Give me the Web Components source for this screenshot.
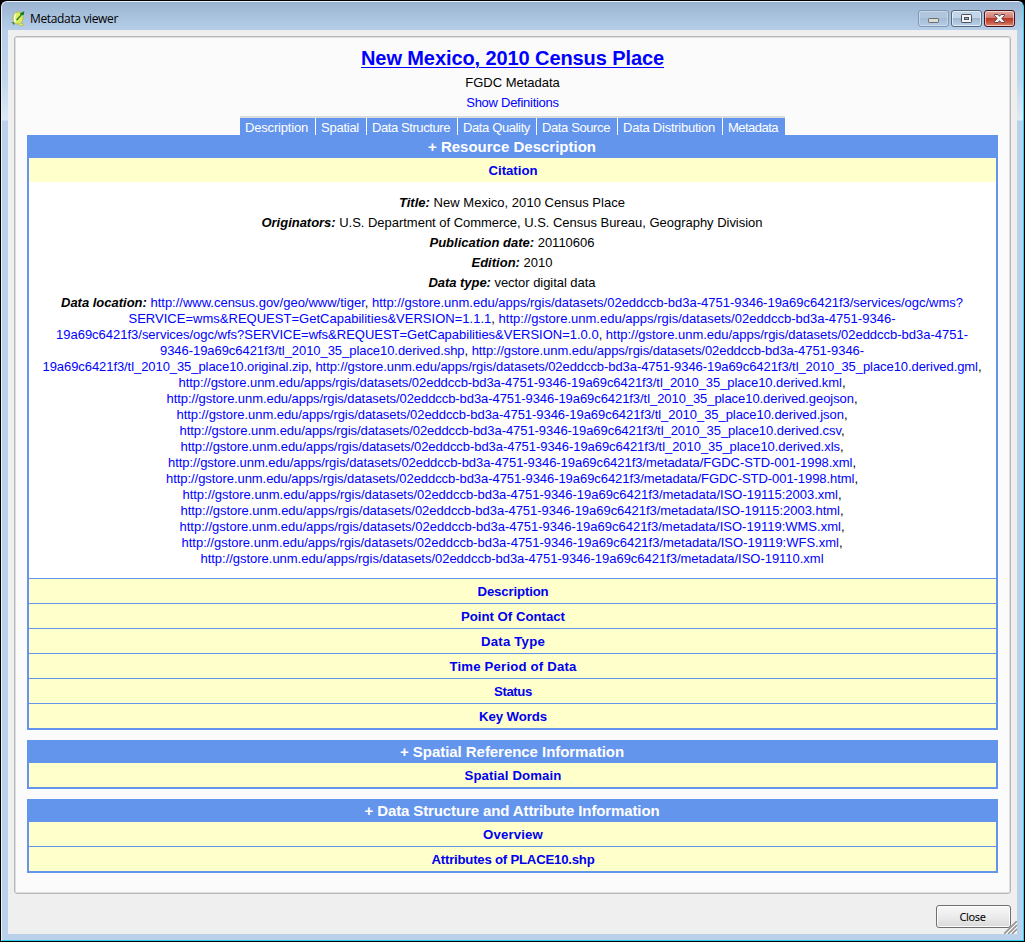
<!DOCTYPE html>
<html lang="en">
<head>
<meta charset="utf-8">
<title>Metadata viewer</title>
<style>
html,body{margin:0;height:100%;overflow:hidden;background:#000}
body{font:13px/16px "Liberation Sans",Arial,sans-serif;color:#000}
</style>
</head>
<body>
<viewer-window></viewer-window>

<template id="t-window">
<style>
:host{display:flex;flex-direction:column;box-sizing:border-box;width:1025px;height:942px;padding:1px 1px 1px 1px;background:#000}
.frame{flex:1;display:flex;flex-direction:column;box-sizing:border-box;border:1px solid #e8f1fa;border-right-color:#2fd0ee;border-bottom-color:#2fd0ee;border-radius:6px 6px 0 0;padding:0 6px 6px 6px;
background:linear-gradient(#99b4d1,#b7cfe9 29px,#b9d1ea 50px,#bfd5ec 75px,#dde9f5 117px,#dde9f5 118px,#b9d1ea 119px,#b9d1ea)}
.client{flex:1;display:flex;flex-direction:column;background:#efefef;padding:6px 6px 0;min-height:0}
.panel{height:858px;box-sizing:border-box;border:1px solid #b8b8b8;border-radius:3px;box-shadow:inset 0 0 0 1px #dedede;background:#fbfbfb;padding:9px 10px 0 12px}
.foot{flex:1;position:relative;display:flex;justify-content:flex-end;align-items:flex-start;padding-top:11px}
.grip{position:absolute;right:-6px;bottom:0}
</style>
<div class="frame">
<title-bar></title-bar>
<div class="client">
<div class="panel"><meta-page></meta-page></div>
<div class="foot"><push-button><fit-text w="26">Close</fit-text></push-button>
<svg class="grip" width="13" height="13" viewBox="0 0 13 13"><path d="M0 13L13 0M4 13L13 4M8 13L13 8" stroke="#969696" stroke-width="1.7"/><path d="M2 13L13 2M6 13L13 6M10 13L13 10" stroke="#fff"/></svg>
</div>
</div>
</div>
</template>

<template id="t-titlebar">
<style>
:host{display:flex;height:28px;align-items:flex-start;font:12px/16px "Open Sans","Noto Sans",sans-serif}
.icon{margin:9px 5px 0 3px;display:block}
.name{flex:1;padding-top:9px}
.buttons{display:flex;gap:2px;padding-top:8px;margin-right:2px}
.b{box-sizing:border-box;width:31px;height:17px;border:1px solid #56687f;border-radius:3px;box-shadow:inset 0 0 0 1px #ffffff90;background:linear-gradient(#c3d5e8 47%,#9fb8d2 50%,#bcd2e9);display:flex;align-items:center;justify-content:center}
.min{border-color:#7e97b5;box-shadow:inset 0 0 0 1px #ffffff55;background:linear-gradient(#b0c6dd 47%,#a4bdd7 50%,#b5cce5)}
.x{border-color:#4b1119;background:linear-gradient(#e5a99f,#d17a6c 46%,#b93a27 50%,#c85441 75%,#dd8a70)}
svg{display:block}
</style>
<svg class="icon" width="14" height="17" viewBox="0 0 14 17"><path d="M4 1.8C6.4 .4 10.4 .8 11.6 4C12.8 7.5 11.4 11.4 9 12.6C5.8 14 2 12 2 8C2 5.2 2.6 3.2 4 1.8Z" fill="#dfea5c" stroke="#a9b84a" stroke-width=".8"/><path d="M5.2 2.8C3.2 4.8 3.2 8.8 4.4 11" stroke="#fff" stroke-width="1.3" fill="none"/><path d="M7 12.2L9 14.8L12.8 14.2L12 12.4L10 13" fill="#edf28a" stroke="#a9b84a" stroke-width=".8"/><path d="M5 8.8L9.4 4L9.2 2.2L13.2 .3L13 3.8L11 4L6.2 9.6Z" fill="#117c20"/><path d="M0 11L3.2 11.8L3.2 14.6L2 12.6Z" fill="#125e1e"/></svg>
<div class="name"><fit-text w="88">Metadata viewer</fit-text></div>
<div class="buttons">
<div class="b min"><svg width="13" height="13"><rect x="1.5" y="6.5" width="10" height="4" rx=".7" fill="#dcdcd6" stroke="#6d6d70"/></svg></div>
<div class="b"><svg width="13" height="11"><rect x="1.5" y="1.5" width="10" height="8" rx=".7" fill="#f5f5f5" stroke="#4b4f60"/><rect x="4.5" y="4.5" width="4" height="2" fill="#8eafd2" stroke="#4b4f60"/></svg></div>
<div class="b x"><svg width="13" height="11" viewBox="0 0 13 11"><path d="M1.5 1.5H5L6.5 3.3L8 1.5H11.5V2.5L8.8 5.5L11.5 8.5V9.5H8L6.5 7.7L5 9.5H1.5V8.5L4.2 5.5L1.5 2.5Z" fill="#f4f4f4" stroke="#5a4650"/></svg></div>
</div>
</template>

<template id="t-button">
<style>
:host{display:flex;box-sizing:border-box;width:75px;height:23px;border:1px solid #707070;border-radius:3px;box-shadow:inset 0 0 0 1px #fcfcfc;background:linear-gradient(#f7f7f7,#ececec 50%,#d9d9d9);align-items:center;justify-content:center;padding-right:2px;font:11px/14px "Noto Sans","Open Sans",sans-serif}
</style><slot></slot>
</template>

<template id="t-page">
<style>
:host{display:flex;flex-direction:column;align-items:center;width:971px}
a{color:#00f;text-decoration:none}
h1{margin:0;font-size:20px;line-height:24px;font-weight:bold}
h1 a{text-decoration:underline;color:#00f;text-decoration-thickness:1px;text-underline-offset:2px}
.sub{margin-top:4px;height:16px}
h1+.sub{margin-top:5px}
.tabs{display:flex;gap:1px;border-top:2px solid #dcdcdc;margin:5px 0 0 0;height:17px;background:#fff}
meta-section{align-self:stretch;margin-bottom:10px}
.cite{background:#fff;padding:13px 1px 11px 0;display:flex;flex-direction:column;align-items:center}
.cite>div{margin-bottom:4px}
.cite>div.loc{margin:0;display:flex;flex-direction:column;align-items:center}
</style>
<h1><a href="#"><fit-text w="303">New Mexico, 2010 Census Place</fit-text></a></h1>
<div class="sub"><fit-text w="94.5">FGDC Metadata</fit-text></div>
<div class="sub"><a href="#"><fit-text w="92.5">Show Definitions</fit-text></a></div>
<div class="tabs">
<meta-tab style="width:75px"><fit-text w="63">Description</fit-text></meta-tab>
<meta-tab style="width:50px"><fit-text w="38">Spatial</fit-text></meta-tab>
<meta-tab style="width:90px"><fit-text w="78">Data Structure</fit-text></meta-tab>
<meta-tab style="width:78px"><fit-text w="67">Data Quality</fit-text></meta-tab>
<meta-tab style="width:80px"><fit-text w="68">Data Source</fit-text></meta-tab>
<meta-tab style="width:104px"><fit-text w="92">Data Distribution</fit-text></meta-tab>
<meta-tab style="width:62px"><fit-text w="50">Metadata</fit-text></meta-tab>
</div>
<meta-section>
<fit-text slot="head" w="168">+ Resource Description</fit-text>
<meta-row first><fit-text w="49">Citation</fit-text></meta-row>
<div class="cite">
<div><fit-text w="226"><b><i>Title:</i></b> New Mexico, 2010 Census Place</fit-text></div>
<div><fit-text w="501"><b><i>Originators:</i></b> U.S. Department of Commerce, U.S. Census Bureau, Geography Division</fit-text></div>
<div><fit-text w="165"><b><i>Publication date:</i></b> 20110606</fit-text></div>
<div><fit-text w="81"><b><i>Edition:</i></b> 2010</fit-text></div>
<div><fit-text w="167"><b><i>Data type:</i></b> vector digital data</fit-text></div>
<div class="loc">
<fit-text w="902"><b><i>Data location:</i></b> <a>http://www.census.gov/geo/www/tiger</a>, <a>http://gstore.unm.edu/apps/rgis/datasets/02eddccb-bd3a-4751-9346-19a69c6421f3/services/ogc/wms?</a></fit-text>
<fit-text w="767"><a>SERVICE=wms&amp;REQUEST=GetCapabilities&amp;VERSION=1.1.1</a>, <a>http://gstore.unm.edu/apps/rgis/datasets/02eddccb-bd3a-4751-9346-</a></fit-text>
<fit-text w="912"><a>19a69c6421f3/services/ogc/wfs?SERVICE=wfs&amp;REQUEST=GetCapabilities&amp;VERSION=1.0.0</a>, <a>http://gstore.unm.edu/apps/rgis/datasets/02eddccb-bd3a-4751-</a></fit-text>
<fit-text w="704"><a>9346-19a69c6421f3/tl_2010_35_place10.derived.shp</a>, <a>http://gstore.unm.edu/apps/rgis/datasets/02eddccb-bd3a-4751-9346-</a></fit-text>
<fit-text w="939"><a>19a69c6421f3/tl_2010_35_place10.original.zip</a>, <a>http://gstore.unm.edu/apps/rgis/datasets/02eddccb-bd3a-4751-9346-19a69c6421f3/tl_2010_35_place10.derived.gml</a>,</fit-text>
<fit-text w="667"><a>http://gstore.unm.edu/apps/rgis/datasets/02eddccb-bd3a-4751-9346-19a69c6421f3/tl_2010_35_place10.derived.kml</a>,</fit-text>
<fit-text w="691"><a>http://gstore.unm.edu/apps/rgis/datasets/02eddccb-bd3a-4751-9346-19a69c6421f3/tl_2010_35_place10.derived.geojson</a>,</fit-text>
<fit-text w="671"><a>http://gstore.unm.edu/apps/rgis/datasets/02eddccb-bd3a-4751-9346-19a69c6421f3/tl_2010_35_place10.derived.json</a>,</fit-text>
<fit-text w="665"><a>http://gstore.unm.edu/apps/rgis/datasets/02eddccb-bd3a-4751-9346-19a69c6421f3/tl_2010_35_place10.derived.csv</a>,</fit-text>
<fit-text w="663"><a>http://gstore.unm.edu/apps/rgis/datasets/02eddccb-bd3a-4751-9346-19a69c6421f3/tl_2010_35_place10.derived.xls</a>,</fit-text>
<fit-text w="688"><a>http://gstore.unm.edu/apps/rgis/datasets/02eddccb-bd3a-4751-9346-19a69c6421f3/metadata/FGDC-STD-001-1998.xml</a>,</fit-text>
<fit-text w="692"><a>http://gstore.unm.edu/apps/rgis/datasets/02eddccb-bd3a-4751-9346-19a69c6421f3/metadata/FGDC-STD-001-1998.html</a>,</fit-text>
<fit-text w="659"><a>http://gstore.unm.edu/apps/rgis/datasets/02eddccb-bd3a-4751-9346-19a69c6421f3/metadata/ISO-19115:2003.xml</a>,</fit-text>
<fit-text w="663"><a>http://gstore.unm.edu/apps/rgis/datasets/02eddccb-bd3a-4751-9346-19a69c6421f3/metadata/ISO-19115:2003.html</a>,</fit-text>
<fit-text w="665"><a>http://gstore.unm.edu/apps/rgis/datasets/02eddccb-bd3a-4751-9346-19a69c6421f3/metadata/ISO-19119:WMS.xml</a>,</fit-text>
<fit-text w="661"><a>http://gstore.unm.edu/apps/rgis/datasets/02eddccb-bd3a-4751-9346-19a69c6421f3/metadata/ISO-19119:WFS.xml</a>,</fit-text>
<fit-text w="623"><a>http://gstore.unm.edu/apps/rgis/datasets/02eddccb-bd3a-4751-9346-19a69c6421f3/metadata/ISO-19110.xml</a></fit-text>
</div>
</div>
<meta-row><fit-text w="71">Description</fit-text></meta-row>
<meta-row><fit-text w="104">Point Of Contact</fit-text></meta-row>
<meta-row><fit-text w="64">Data Type</fit-text></meta-row>
<meta-row><fit-text w="127">Time Period of Data</fit-text></meta-row>
<meta-row><fit-text w="38">Status</fit-text></meta-row>
<meta-row><fit-text w="68">Key Words</fit-text></meta-row>
</meta-section>
<meta-section>
<fit-text slot="head" w="224">+ Spatial Reference Information</fit-text>
<meta-row first><fit-text w="97">Spatial Domain</fit-text></meta-row>
</meta-section>
<meta-section>
<fit-text slot="head" w="295">+ Data Structure and Attribute Information</fit-text>
<meta-row first><fit-text w="60">Overview</fit-text></meta-row>
<meta-row><fit-text w="163">Attributes of PLACE10.shp</fit-text></meta-row>
</meta-section>
</template>

<template id="t-tab">
<style>:host{display:block;box-sizing:border-box;height:17px;padding:2px 0 0 5px;background:#6495ed;color:#fff;line-height:16px}</style><slot></slot>
</template>

<template id="t-section">
<style>
:host{display:block;box-sizing:border-box;border:2px solid #6495ed;border-top:0}
.h{height:23px;box-sizing:border-box;padding:3px 1px 0 0;background:#6495ed;color:#fff;font-size:15px;line-height:17px;font-weight:bold;text-align:center}
</style><div class="h"><slot name="head"></slot></div><slot></slot>
</template>

<template id="t-row">
<style>
:host{display:block;box-sizing:border-box;height:25px;border-top:1px solid #6495ed;background:#ffffcc;color:#0000f0;font-weight:bold;font-size:13.2px;line-height:24px;text-align:center;padding:1px 0 0 1px}
:host([first]){height:24px;border-top:0}
</style><slot></slot>
</template>

<template id="t-fit">
<style>:host{display:inline-block;white-space:nowrap;text-decoration:inherit;vertical-align:top}</style><span><slot></slot></span>
</template>

<script>
function define(name, id, connected) {
  customElements.define(name, class extends HTMLElement {
    constructor() {
      super();
      this.attachShadow({mode: 'open'}).append(document.getElementById(id).content.cloneNode(true));
    }
    connectedCallback() { if (connected) connected(this); }
  });
}
define('viewer-window', 't-window');
define('title-bar', 't-titlebar');
define('push-button', 't-button');
define('meta-page', 't-page');
define('meta-tab', 't-tab');
define('meta-section', 't-section');
define('meta-row', 't-row');
// Tracks its text out to the width in the "w" attribute; defined last, when the layout is ready to measure.
define('fit-text', 't-fit', el => {
  const w = +el.getAttribute('w');
  const natural = el.getBoundingClientRect().width;
  el.style.letterSpacing = (w - natural) / el.textContent.length + 'px';
  el.style.width = w + 'px';
});
</script>
</body>
</html>
